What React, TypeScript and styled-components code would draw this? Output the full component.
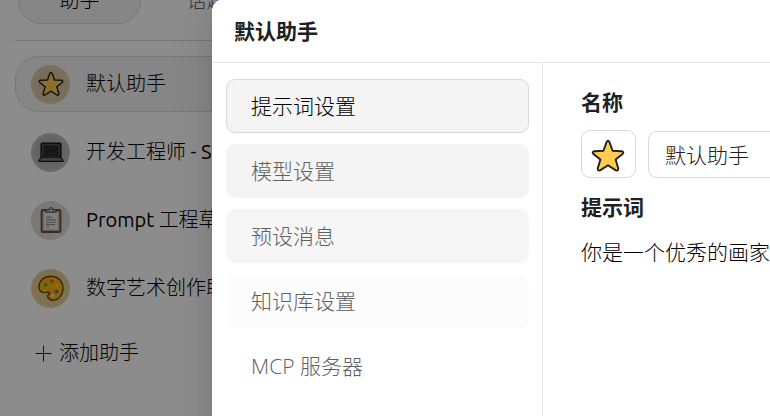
import React from 'react';
import styled, { createGlobalStyle } from 'styled-components';

const GlobalStyle = createGlobalStyle`
  *, *::before, *::after { box-sizing: border-box; }
  html, body, #root { height: 100%; }
  body {
    margin: 0;
    overflow: hidden;
    background: #ffffff;
    color: #000000;
    font-family: "Open Sans", "Noto Sans CJK SC", sans-serif;
    font-weight: 300;
    font-size: 21px;
    line-height: 32px;
  }
  button, input, textarea { font: inherit; color: inherit; margin: 0; }
`;

const Page = styled.div`
  position: relative;
  height: 100%;
  overflow: hidden;
`;

const Sidebar = styled.aside`
  display: flex;
  flex-direction: column;
  width: 360px;
  margin-top: -23px;
  padding-left: 15px;
  font-family: Ubuntu, "Noto Sans", "Noto Sans CJK SC", sans-serif;
  font-size: 20px;
`;

const Tabs = styled.div`
  display: flex;
  gap: 4px;
  padding: 0 3px 16px;
  border-bottom: 1px solid #d8d8d8;
`;

const Tab = styled.button<{ $active?: boolean }>`
  width: 123px;
  height: 47px;
  padding: 0;
  border: 1px solid ${(p) => (p.$active ? '#d8d8d8' : 'transparent')};
  border-radius: 24px;
  background: ${(p) => (p.$active ? '#f5f5f5' : 'transparent')};
  color: ${(p) => (p.$active ? '#000000' : '#666666')};
`;

const AssistantList = styled.nav`
  display: flex;
  flex-direction: column;
  gap: 12px;
  padding-top: 15px;
`;

const AssistantItem = styled.button<{ $active?: boolean }>`
  display: flex;
  align-items: center;
  gap: 16px;
  height: 56px;
  padding: 0 15px;
  border: 1px solid ${(p) => (p.$active ? '#d8d8d8' : 'transparent')};
  border-radius: 24px;
  background: ${(p) => (p.$active ? '#f5f5f5' : 'transparent')};
  text-align: left;
  white-space: nowrap;
`;

const Latin = styled.span`
  font-weight: 400;
`;

const Avatar = styled.span<{ $from: string; $to: string }>`
  display: flex;
  flex: none;
  align-items: center;
  justify-content: center;
  width: 39px;
  height: 39px;
  border-radius: 50%;
  background: radial-gradient(circle, ${(p) => p.$from} 10%, ${(p) => p.$to} 70%);
`;

const AddButton = styled.button`
  display: flex;
  align-items: center;
  gap: 7px;
  height: 50px;
  padding: 0 20px;
  border: 0;
  background: transparent;
`;

const Mask = styled.div`
  position: absolute;
  inset: 0;
  background: rgba(0, 0, 0, 0.45);
`;

const Modal = styled.section`
  position: absolute;
  inset: -1px -48px -24px 212px;
  display: flex;
  flex-direction: column;
  overflow: hidden;
  border-radius: 12px;
  background: #ffffff;
  box-shadow: 0 8px 24px rgba(0, 0, 0, 0.08), 0 4px 9px -6px rgba(0, 0, 0, 0.12),
    0 14px 42px 12px rgba(0, 0, 0, 0.05);
`;

const ModalHeader = styled.header`
  display: flex;
  align-items: center;
  height: 64px;
  padding: 0 22px;
  border-bottom: 1px solid #e4e4e4;
`;

const Title = styled.h1`
  margin: 0;
  color: #202020;
  font-size: 21px;
  font-weight: 700;
`;

const ModalBody = styled.div`
  display: flex;
  flex: 1;
  min-height: 0;
`;

const Menu = styled.nav`
  display: flex;
  flex: none;
  flex-direction: column;
  gap: 11px;
  width: 331px;
  padding: 16px 13px 0 14px;
  border-right: 1px solid #e4e4e4;
`;

const MenuItem = styled.button<{ $active?: boolean; $fill: string }>`
  height: 54px;
  padding: 0 24px;
  border: 1px solid ${(p) => (p.$active ? '#d9d9d9' : 'transparent')};
  border-radius: 9px;
  background: ${(p) => p.$fill};
  color: ${(p) => (p.$active ? '#000000' : '#606060')};
  text-align: left;
`;

const Form = styled.form`
  display: flex;
  flex: 1;
  flex-direction: column;
  min-width: 0;
  padding: 23px 24px 0 38px;
`;

const Label = styled.label`
  color: #202020;
  font-weight: 700;
`;

const NameRow = styled.div`
  display: flex;
  align-items: flex-end;
  gap: 12px;
  margin: 12px 0 13px;
`;

const EmojiButton = styled.button`
  display: flex;
  flex: none;
  align-items: center;
  justify-content: center;
  width: 55px;
  height: 48px;
  padding: 3px 2px 0 0;
  border: 1px solid #d9d9d9;
  border-radius: 9px;
  background: #ffffff;
`;

const NameInput = styled.input`
  flex: 1;
  min-width: 0;
  height: 47px;
  padding: 0 16px 2px;
  border: 1px solid #d9d9d9;
  border-radius: 9px;
  background: #ffffff;
  color: #202020;
`;

const PromptText = styled.textarea`
  height: 120px;
  margin-top: 13px;
  padding: 0;
  border: 0;
  resize: none;
  background: transparent;
`;

const Star = ({ size }: { size: number }) => (
  <svg width={size} height={size} viewBox="0 0 34 34" aria-hidden="true">
    <path
      d="M15.6 3 Q17 0.6 18.4 3 L21.6 11.8 L30.8 12.2 Q33.4 12.8 31.6 15 L24.6 20.6 L27.3 29.6 Q27.4 32.2 24.9 31.4 L17 26.2 L9.1 31.4 Q6.6 32.2 6.7 29.6 L9.4 20.6 L2.4 15 Q0.6 12.8 3.2 12.2 L12.4 11.8 Z"
      fill="#fdcb50"
      stroke="#1f1f1f"
      strokeWidth="1.9"
      strokeLinejoin="round"
    />
  </svg>
);

const Laptop = () => (
  <svg width="26" height="26" viewBox="0 0 26 26" aria-hidden="true">
    <rect x="3.2" y="4.2" width="19.6" height="14.6" rx="1" fill="#2b2b2b" stroke="#181818" strokeWidth="1.6" />
    <rect x="4.8" y="5.8" width="16.4" height="11.6" fill="#2c2c2c" stroke="#777" strokeWidth="0.7" />
    <path d="M3.3 18.2 H22.7 L25 21.5 V22.3 H1 V21.5 Z" fill="#777" stroke="#181818" strokeWidth="1.3" strokeLinejoin="round" />
  </svg>
);

const Clipboard = () => (
  <svg width="26" height="28" viewBox="0 0 26 28" aria-hidden="true">
    <rect x="3.5" y="4" width="19" height="22" rx="1.3" fill="#d3a684" stroke="#5a5551" strokeWidth="1.8" />
    <rect x="5.8" y="6" width="14.4" height="17.6" fill="#e6e6e6" />
    <path d="M8 6.2 V3.6 H11 Q11.2 1.6 13 1.6 Q14.8 1.6 15 3.6 H18 V6.2 Z" fill="#c4c4c4" stroke="#5a5551" strokeWidth="1.3" strokeLinejoin="round" />
    <path d="M8 11.2 H14 M8 13.8 H18 M8 16.2 H18 M8 18.6 H17 M8 21 H11" stroke="#7d7d7d" strokeWidth="0.9" />
  </svg>
);

const Palette = () => (
  <svg width="28" height="28" viewBox="0 0 28 28" aria-hidden="true">
    <path
      d="M14 2.2 C7.2 2.2 2 6.8 2 12.6 C2 16.4 4.4 18.6 7.6 18.6 C9.4 18.6 11 18 12.1 18.4 C13.3 18.9 12.4 20 11.4 20.8 C9.6 22.8 12 26.2 15.6 26.2 C21.8 26.2 26 20.6 26 14.2 C26 7.2 20.8 2.2 14 2.2 Z"
      fill="#fcb411"
      stroke="#5a4718"
      strokeWidth="1.4"
    />
    <circle cx="8.6" cy="10.8" r="1.9" fill="#47b52a" />
    <circle cx="14.8" cy="7.4" r="1.9" fill="#ee6336" />
    <circle cx="20" cy="11.6" r="1.9" fill="#ffcf20" />
    <circle cx="19.4" cy="17.6" r="1.9" fill="#456fd2" />
    <circle cx="15.8" cy="21.6" r="1.7" fill="#f3e3bd" />
  </svg>
);

const Plus = () => (
  <svg width="17" height="17" viewBox="0 0 17 17" aria-hidden="true">
    <path d="M8.5 0.5 V16.5 M0.5 8.5 H16.5" stroke="#222" strokeWidth="1" />
  </svg>
);

const assistants = [
  { id: 'default', name: '默认助手', icon: <Star size={26} />, from: '#d8c092', to: '#dccbaa' },
  { id: 'developer', name: <>开发工程师<Latin> - Software</Latin></>, icon: <Laptop />, from: '#a4a4a4', to: '#c0c0c0' },
  { id: 'prompt', name: <><Latin>Prompt </Latin>工程草稿</>, icon: <Clipboard />, from: '#e0dbd6', to: '#dedbd7' },
  { id: 'art', name: '数字艺术创作助手', icon: <Palette />, from: '#e6c87e', to: '#e4d09c' },
];

const menu = [
  { label: '提示词设置', fill: '#f4f4f4' },
  { label: '模型设置', fill: '#f4f4f4' },
  { label: '预设消息', fill: '#f6f6f6' },
  { label: '知识库设置', fill: '#fcfcfc' },
  { label: 'MCP 服务器', fill: 'transparent' },
];

export default function App() {
  return (
    <>
      <GlobalStyle />
      <Page>
        <Sidebar>
          <Tabs>
            <Tab $active>助手</Tab>
            <Tab>话题</Tab>
          </Tabs>
          <AssistantList>
            {assistants.map((a, i) => (
              <AssistantItem key={a.id} $active={i === 0}>
                <Avatar $from={a.from} $to={a.to}>{a.icon}</Avatar>
                <span>{a.name}</span>
              </AssistantItem>
            ))}
            <AddButton>
              <Plus />
              添加助手
            </AddButton>
          </AssistantList>
        </Sidebar>
        <Mask />
        <Modal role="dialog" aria-labelledby="dialog-title">
          <ModalHeader>
            <Title id="dialog-title">默认助手</Title>
          </ModalHeader>
          <ModalBody>
            <Menu>
              {menu.map((m, i) => (
                <MenuItem key={m.label} $active={i === 0} $fill={m.fill}>{m.label}</MenuItem>
              ))}
            </Menu>
            <Form>
              <Label htmlFor="assistant-name">名称</Label>
              <NameRow>
                <EmojiButton type="button" aria-label="⭐">
                  <Star size={34} />
                </EmojiButton>
                <NameInput id="assistant-name" defaultValue="默认助手" />
              </NameRow>
              <Label htmlFor="assistant-prompt">提示词</Label>
              <PromptText id="assistant-prompt" defaultValue="你是一个优秀的画家" />
            </Form>
          </ModalBody>
        </Modal>
      </Page>
    </>
  );
}
